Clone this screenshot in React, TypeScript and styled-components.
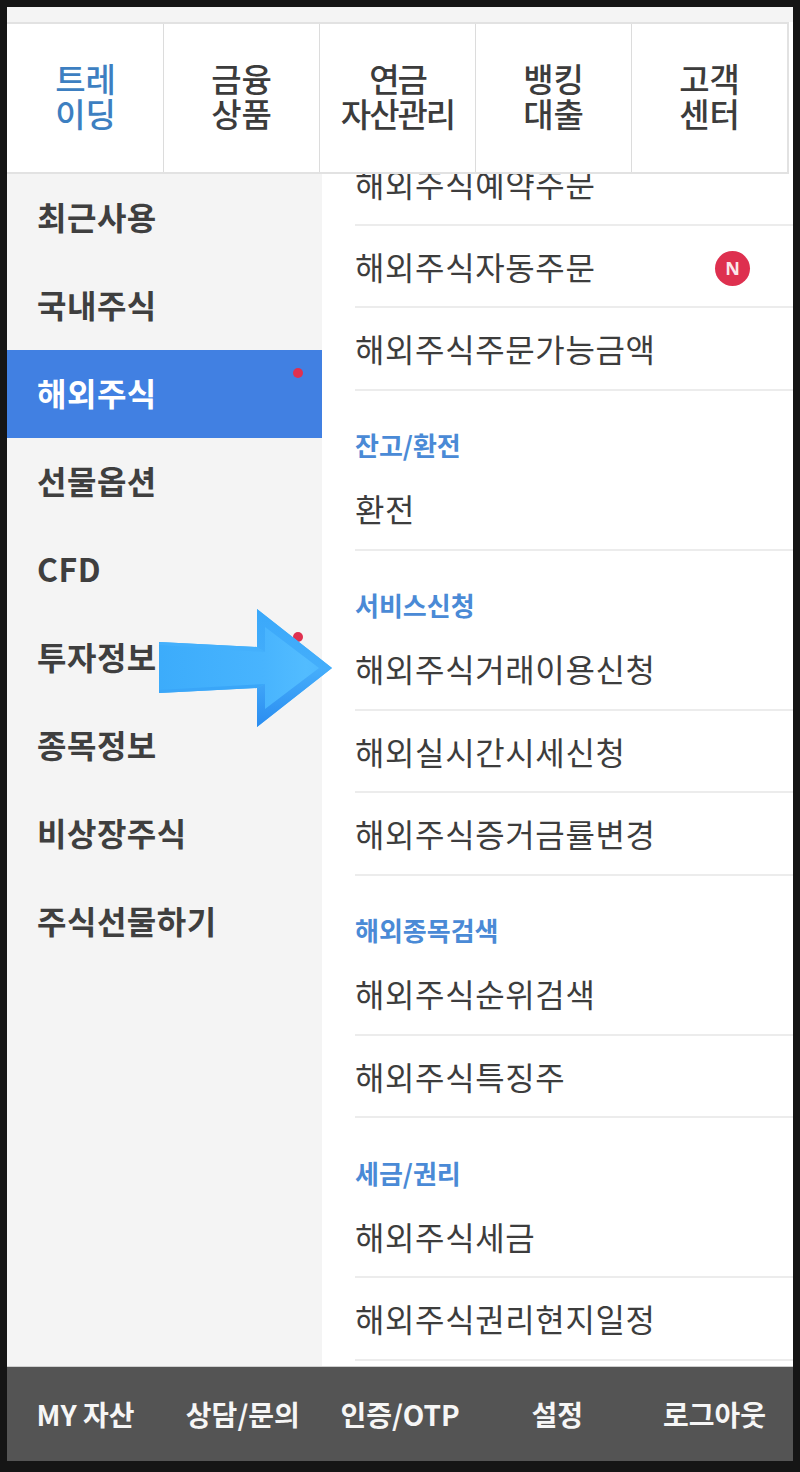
import React from "react";
import styled, { createGlobalStyle } from "styled-components";

const GlobalStyle = createGlobalStyle`
  html, body {
    margin: 0;
    padding: 0;
    background: #151515;
  }
  * {
    box-sizing: border-box;
  }
`;

const Screen = styled.div`
  position: relative;
  width: 800px;
  height: 1472px;
  padding: 7px 7px 11px;
  background: #151515;
  font-family: "Noto Sans CJK KR", "Noto Sans", sans-serif;
`;

const Panel = styled.div`
  display: flex;
  flex-direction: column;
  height: 100%;
  background: #fff;
  overflow: hidden;
`;

const TopStrip = styled.div`
  height: 15px;
  flex: none;
  background: #f4f4f4;
`;

const Tabs = styled.div`
  display: flex;
  flex: none;
  height: 152px;
  width: 782px;
  padding-left: 1px;
  border-top: 2px solid #e2e2e2;
  border-bottom: 2px solid #e2e2e2;
  border-right: 2px solid #e2e2e2;
  background: #fff;
`;

const Tab = styled.div<{ $active?: boolean }>`
  flex: 1;
  display: flex;
  align-items: center;
  justify-content: center;
  text-align: center;
  white-space: pre-line;
  font-size: 33px;
  font-weight: 500;
  line-height: 35px;
  letter-spacing: 0;
  color: ${(p) => (p.$active ? "#3d7fc1" : "#3c3c3c")};
  border-left: 1px solid #dcdcdc;
  padding-bottom: 4px;

  &:first-child {
    border-left: 0;
  }
`;

const TabTight = styled(Tab)`
  letter-spacing: -2px;
`;

const Body = styled.div`
  flex: 1;
  display: flex;
  min-height: 0;
`;

const Side = styled.div`
  width: 315px;
  flex: none;
  background: #f4f4f4;
`;

const SideItem = styled.div<{ $active?: boolean }>`
  position: relative;
  display: flex;
  align-items: center;
  height: 88px;
  padding: 0 0 4px 30px;
  font-size: 32px;
  font-weight: 700;
  letter-spacing: 0.5px;
  color: ${(p) => (p.$active ? "#fff" : "#3f3f3f")};
  background: ${(p) => (p.$active ? "#4180e2" : "transparent")};
`;

const Dot = styled.span`
  position: absolute;
  top: 18px;
  left: 286px;
  width: 10px;
  height: 10px;
  border-radius: 50%;
  background: #e0304f;
`;

const Menu = styled.div`
  flex: 1;
  min-width: 0;
  padding-left: 33px;
  overflow: hidden;
`;

const MenuScroll = styled.div`
  margin-top: -31px;
`;

const Row = styled.div`
  position: relative;
  display: flex;
  align-items: center;
  height: 82.5px;
  font-size: 32px;
  letter-spacing: 0.62px;
  color: #3d3d3d;
  border-bottom: 2px solid #ececec;
`;

const SectionTitle = styled.div`
  display: flex;
  align-items: flex-end;
  height: 77.5px;
  padding-bottom: 5px;
  font-size: 26px;
  font-weight: 700;
  letter-spacing: 0;
  color: #4a8ad6;
`;

const Badge = styled.span`
  position: absolute;
  top: 25px;
  right: 43px;
  width: 35px;
  height: 35px;
  display: flex;
  align-items: center;
  justify-content: center;
  border-radius: 50%;
  font-family: "Noto Sans", sans-serif;
  font-size: 18px;
  font-weight: 700;
  letter-spacing: 0;
  color: #fbe6ea;
  background: #de304f;
`;

const BottomBar = styled.div`
  flex: none;
  display: flex;
  align-items: center;
  height: 95px;
  border-top: 1px solid #cfcfcf;
  background: #545454;
`;

const BottomItem = styled.div`
  flex: 1;
  text-align: center;
  white-space: nowrap;
  font-size: 28px;
  font-weight: 700;
  letter-spacing: 0;
  color: #f6f6f6;
`;

const ArrowMark = styled.svg`
  position: absolute;
  left: 155px;
  top: 605px;
`;

const sideItems = ["최근사용", "국내주식", "해외주식", "선물옵션", "CFD", "투자정보", "종목정보", "비상장주식", "주식선물하기"];

const sections: { title?: string; rows: string[] }[] = [
  { rows: ["해외주식예약주문", "해외주식자동주문", "해외주식주문가능금액"] },
  { title: "잔고/환전", rows: ["환전"] },
  { title: "서비스신청", rows: ["해외주식거래이용신청", "해외실시간시세신청", "해외주식증거금률변경"] },
  { title: "해외종목검색", rows: ["해외주식순위검색", "해외주식특징주"] },
  { title: "세금/권리", rows: ["해외주식세금", "해외주식권리현지일정"] },
];

const bottomItems = ["MY 자산", "상담/문의", "인증/OTP", "설정", "로그아웃"];

const Arrow = () => (
  <ArrowMark width="182" height="126" viewBox="0 0 182 126">
    <defs>
      <linearGradient id="arrowFill" x1="0" y1="0" x2="1" y2="0">
        <stop offset="0" stopColor="#3cacfb" />
        <stop offset="0.6" stopColor="#48b4fe" />
        <stop offset="0.85" stopColor="#52bcff" />
        <stop offset="1" stopColor="#4cb6ff" />
      </linearGradient>
      <linearGradient id="arrowLow" x1="0" y1="0" x2="0" y2="1">
        <stop offset="0" stopColor="#46aefb" />
        <stop offset="1" stopColor="#2a8cf0" />
      </linearGradient>
      <linearGradient id="arrowHigh" x1="0" y1="0" x2="0" y2="1">
        <stop offset="0" stopColor="#3aa8fa" />
        <stop offset="1" stopColor="#44aefb" />
      </linearGradient>
    </defs>
    <polygon points="4,37 102,42 102,4 177,63 102,122 102,83 4,88" fill="url(#arrowFill)" />
    <polygon points="102,4 177,63 164,63 110,22 110,47 102,42" fill="url(#arrowHigh)" />
    <polygon points="102,122 177,63 164,63 110,104 110,79 102,83" fill="url(#arrowLow)" />
    <polygon points="4,37 102,42 110,47 4,40" fill="#44b0fc" />
    <polygon points="4,88 102,83 110,79 4,85" fill="#3aa6f8" />
  </ArrowMark>
);

export default function App() {
  return (
    <Screen>
      <GlobalStyle />
      <Panel>
        <TopStrip />
        <Tabs>
          <Tab $active>{"트레\n이딩"}</Tab>
          <Tab>{"금융\n상품"}</Tab>
          <TabTight>{"연금\n자산관리"}</TabTight>
          <Tab>{"뱅킹\n대출"}</Tab>
          <Tab>{"고객\n센터"}</Tab>
        </Tabs>
        <Body>
          <Side>
            {sideItems.map((item, i) => (
              <SideItem key={item} $active={i === 2}>
                {item}
                {(i === 2 || i === 5) && <Dot />}
              </SideItem>
            ))}
          </Side>
          <Menu>
            <MenuScroll>
              {sections.map((section, i) => (
                <div key={i}>
                  {section.title && <SectionTitle>{section.title}</SectionTitle>}
                  {section.rows.map((row) => (
                    <Row key={row}>
                      {row}
                      {row === "해외주식자동주문" && <Badge>N</Badge>}
                    </Row>
                  ))}
                </div>
              ))}
            </MenuScroll>
          </Menu>
        </Body>
        <BottomBar>
          {bottomItems.map((item) => (
            <BottomItem key={item}>{item}</BottomItem>
          ))}
        </BottomBar>
      </Panel>
      <Arrow />
    </Screen>
  );
}
